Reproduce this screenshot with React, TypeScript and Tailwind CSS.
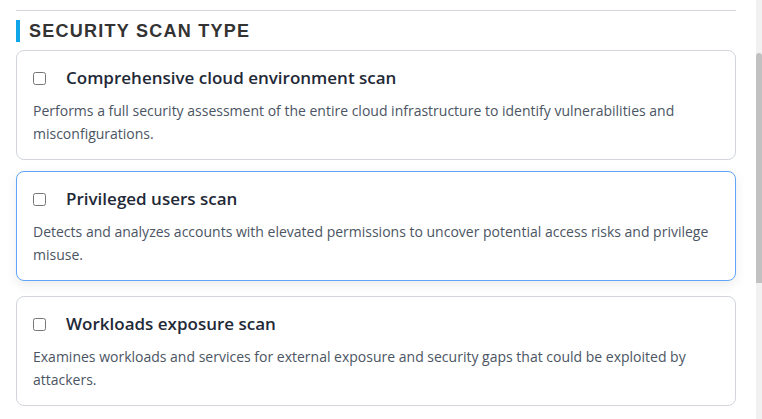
import React, { useEffect, useRef } from 'react';

interface ScanOption {
  id: string;
  title: string;
  description: string;
}

const scanOptions: ScanOption[] = [
  {
    id: 'cloud',
    title: 'Comprehensive cloud environment scan',
    description:
      'Performs a full security assessment of the entire cloud infrastructure to identify vulnerabilities and misconfigurations.',
  },
  {
    id: 'privileged',
    title: 'Privileged users scan',
    description:
      'Detects and analyzes accounts with elevated permissions to uncover potential access risks and privilege misuse.',
  },
  {
    id: 'workloads',
    title: 'Workloads exposure scan',
    description:
      'Examines workloads and services for external exposure and security gaps that could be exploited by attackers.',
  },
];

const ScanCard: React.FC<{ option: ScanOption; active?: boolean }> = ({ option, active }) => (
  <label
    className={
      active
        ? 'block rounded-lg border border-[#60a5fa] bg-white px-4 pt-[15px] pb-[14px] -translate-y-[2px] shadow-[0_4px_12px_rgba(0,0,0,0.08)]'
        : 'block rounded-lg border border-[#d1d5db] bg-white px-4 pt-[15px] pb-[14px]'
    }
  >
    <div className="flex items-center h-6">
      <input type="checkbox" className="w-[13px] h-[13px] m-0 accent-blue-500" />
      <span className="ml-5 text-[17px] font-semibold text-[#1f2937] leading-6">{option.title}</span>
    </div>
    <p className="mt-[9px] text-[14px] leading-[23px] text-[#4b5563]">{option.description}</p>
  </label>
);

export default function App() {
  const scroller = useRef<HTMLDivElement>(null);

  useEffect(() => {
    if (scroller.current) scroller.current.scrollTop = 97;
  }, []);

  return (
    <div className="flex h-screen bg-white" style={{ fontFamily: '"Open Sans", "Noto Sans", sans-serif' }}>
      <div
        ref={scroller}
        className="flex-1 overflow-y-scroll [scrollbar-width:none] [&::-webkit-scrollbar]:hidden"
      >
        <div className="pl-4 pr-5">
          <div className="h-[107px]" />
          <div className="border-t border-[#d1d5db] pt-[9px]">
            <h2
              className="border-l-4 border-[#0ea5e9] pl-[9px] text-[18px] font-bold leading-[22px] tracking-[1.25px] text-[#333333]"
              style={{ fontFamily: '"Liberation Sans", Arial, sans-serif' }}
            >
              SECURITY SCAN TYPE
            </h2>
            <div className="mt-2 flex flex-col gap-[13px]">
              {scanOptions.map((o) => (
                <ScanCard key={o.id} option={o} active={o.id === 'privileged'} />
              ))}
            </div>
          </div>
          <div className="h-[261px]" />
        </div>
      </div>
      {/* scrollbar */}
      <div className="w-[6px] shrink-0 bg-[#f1f1f1]">
        <div className="mt-[53px] h-[230px] rounded-t-[3px] bg-[#c1c1c1]" />
      </div>
    </div>
  );
}
